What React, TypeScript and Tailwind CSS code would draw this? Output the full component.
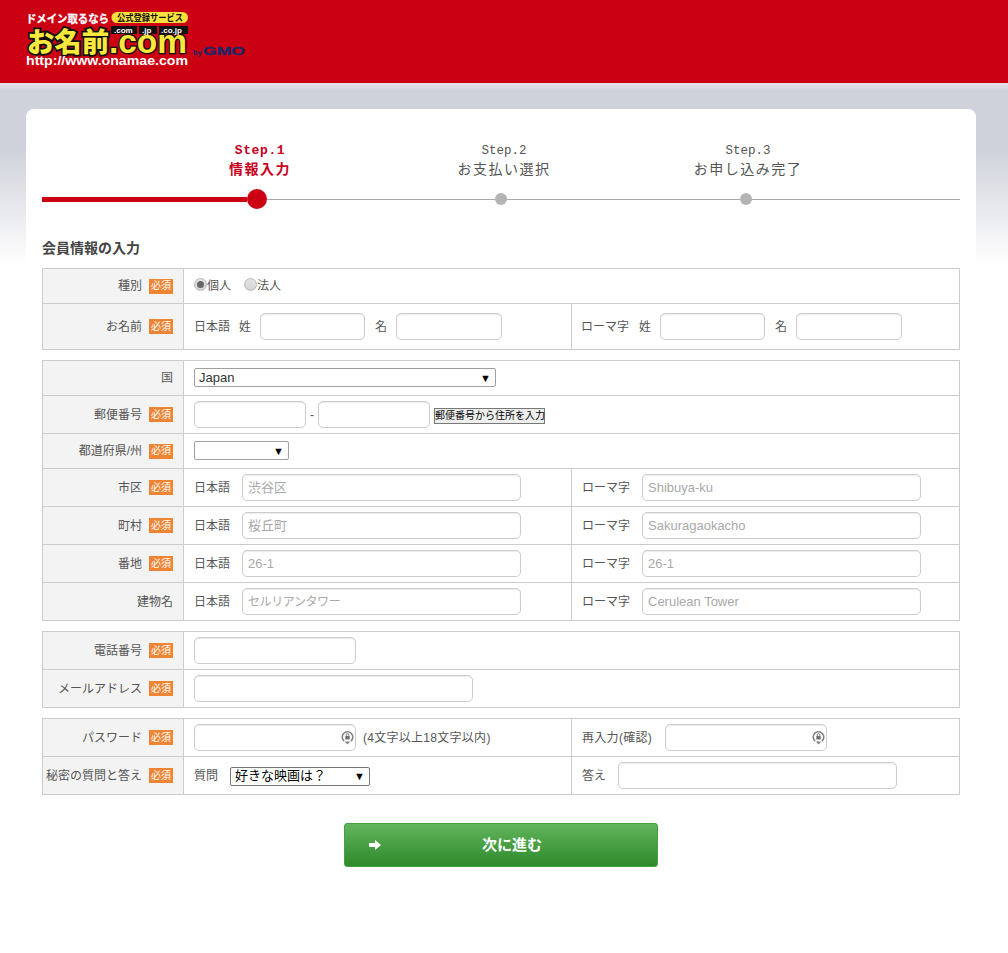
import React from "react";

const Req = () => (
  <span className="ml-[7px] mr-[10px] flex h-[15px] w-[24px] shrink-0 items-center justify-center bg-[#ef8433] text-[10px] leading-none text-white">
    必須
  </span>
);

const Label = ({ text, req = true }: { text: string; req?: boolean }) => (
  <div className="flex w-[141px] shrink-0 items-center justify-end whitespace-nowrap border-r border-[#ccc] bg-[#f3f3f3] text-[12px] text-[#555]">
    <span>{text}</span>
    {req ? <Req /> : <span className="mr-[10px]" />}
  </div>
);

const Row = ({ h, children }: { h: string; children: React.ReactNode }) => (
  <div className={`flex border-b border-[#ccc] last:border-b-0 ${h}`}>{children}</div>
);

const Box = ({ children }: { children: React.ReactNode }) => (
  <div className="w-[918px] border border-[#ccc]">{children}</div>
);

const Input = ({ w, placeholder, cls }: { w: string; placeholder?: string; cls?: string }) => (
  <input
    placeholder={placeholder}
    className={`h-[27px] shrink-0 rounded-[5px] border border-[#ccc] bg-white px-[5px] text-[#555] shadow-[inset_0_1px_1px_rgba(0,0,0,0.08)] outline-none placeholder:text-[#a9a9a9] ${
      cls ?? "text-[13px]"
    } ${w}`}
  />
);

const KeyIcon = () => (
  <svg viewBox="0 0 13 15" className="absolute right-[2px] top-[6px] h-[15px] w-[13px]" fill="none">
    <path d="M3.2 11.2 A5.3 5.3 0 1 1 9.8 11.2" stroke="#808080" strokeWidth="1.6" />
    <path d="M3.9 11.4 L9.1 11.4 L6.5 14.6 Z" fill="#808080" />
    <rect x="4.3" y="6" width="4.4" height="3.4" rx="0.5" fill="#707070" />
    <path d="M5.2 6 V5 A1.3 1.3 0 0 1 7.8 5 V6" stroke="#707070" strokeWidth="0.9" />
  </svg>
);

const PwInput = ({ w }: { w: string }) => (
  <div className={`relative h-[27px] shrink-0 ${w}`}>
    <input
      type="password"
      className="h-full w-full rounded-[5px] border border-[#ccc] bg-white px-[5px] shadow-[inset_0_1px_1px_rgba(0,0,0,0.08)] outline-none"
    />
    <KeyIcon />
  </div>
);

const Arrow = () => (
  <span className="pointer-events-none absolute right-[5px] top-1/2 -translate-y-1/2 text-[11px] leading-none text-black">▼</span>
);

const Select = ({ w, value, dark, shift }: { w: string; value: string; dark?: boolean; shift: string }) => (
  <div className={`relative h-[19px] shrink-0 ${w} ${shift}`}>
    <div
      className={`flex h-full w-full items-center rounded-[2px] border bg-white pl-[4px] text-[13px] ${
        dark ? "border-[#767676] text-black" : "border-[#a0a0a0] text-[#333]"
      }`}
    >
      {value}
    </div>
    <Arrow />
  </div>
);

const Left = ({ children }: { children: React.ReactNode }) => (
  <div className="flex w-[388px] shrink-0 items-center whitespace-nowrap border-r border-[#ccc] pl-[10px] text-[12px] text-[#555]">{children}</div>
);
const Right = ({ children }: { children: React.ReactNode }) => (
  <div className="flex flex-1 items-center whitespace-nowrap pl-[10px] text-[12px] text-[#555]">{children}</div>
);
const Full = ({ children }: { children: React.ReactNode }) => (
  <div className="flex flex-1 items-center whitespace-nowrap pl-[10px] text-[12px] text-[#555]">{children}</div>
);

const AddressRow = ({
  label,
  req,
  ja,
  ro,
  h = "h-[38px]",
  jaCls,
}: {
  label: string;
  req?: boolean;
  ja: string;
  ro: string;
  h?: string;
  jaCls?: string;
}) => (
  <Row h={h}>
    <Label text={label} req={req} />
    <Left>
      <span className="w-[48px]">日本語</span>
      <Input w="w-[279px]" placeholder={ja} cls={jaCls} />
    </Left>
    <Right>
      <span className="w-[60px]">ローマ字</span>
      <Input w="w-[279px]" placeholder={ro} />
    </Right>
  </Row>
);

const Radio = ({ checked, label }: { checked?: boolean; label: string }) => (
  <label className="mr-[13px] flex items-center">
    <span className="-mt-[4px] flex h-[13px] w-[13px] items-center justify-center rounded-full border border-[#b8b8b8] bg-[linear-gradient(#e4e4e4,#d4d4d4)]">
      {checked && <span className="h-[7px] w-[7px] rounded-full bg-[#666]" />}
    </span>
    <span>{label}</span>
  </label>
);

const Step = ({ n, title, active }: { n: number; title: string; active?: boolean }) => (
  <div className={`w-[244px] text-center leading-[18px] ${active ? "text-[#c8001e]" : "text-[#555]"}`}>
    <div className={`font-['Liberation_Mono',monospace] ${active ? "text-[13px] font-bold tracking-[0.6px]" : "text-[12.5px]"}`}>Step.{n}</div>
    <div className={`text-[14px] tracking-[1.5px] ${active ? "font-bold" : ""}`}>{title}</div>
  </div>
);

const Logo = () => (
  <svg width="250" height="83" viewBox="0 0 250 83" className="block" fontFamily="'Liberation Sans','Noto Sans CJK JP',sans-serif" fontWeight="700">
    <text x="26" y="22.5" fontSize="11" fill="#fff" stroke="#fff" strokeWidth="0.3" textLength="83" lengthAdjust="spacingAndGlyphs">ドメイン取るなら</text>
    <rect x="111.5" y="12" width="76.5" height="11" rx="5.5" fill="#f8e03c" />
    <text x="117" y="21.2" fontSize="9" fill="#111" textLength="66" lengthAdjust="spacingAndGlyphs">公式登録サービス</text>
    <text x="27" y="51.5" fontSize="27" fontWeight="900" fill="#fbe83c" stroke="#111" strokeWidth="3.6" paintOrder="stroke" textLength="82" lengthAdjust="spacingAndGlyphs">お名前</text>
    <text x="109" y="53" fontSize="34" fill="#fbe83c" stroke="#111" strokeWidth="2.6" paintOrder="stroke" textLength="78" lengthAdjust="spacingAndGlyphs">.com</text>
    <rect x="111" y="26" width="26" height="8" fill="#111" />
    <rect x="139" y="26" width="18" height="8" fill="#111" />
    <rect x="159" y="26" width="29" height="8" fill="#111" />
    <text x="114" y="33.2" fontSize="8" fill="#fff">.com</text>
    <text x="142" y="33.2" fontSize="8" fill="#fff">.jp</text>
    <text x="161" y="33.2" fontSize="8" fill="#fff">.co.jp</text>
    <text x="26" y="65" fontSize="12.5" fill="#fff" textLength="162" lengthAdjust="spacingAndGlyphs">http://www.onamae.com</text>
    <text x="193" y="54.5" fontSize="7.5" fill="#1c2566">by</text>
    <text x="203" y="54.5" fontSize="10.5" fill="#1c2566" stroke="#1c2566" strokeWidth="0.3" textLength="42" lengthAdjust="spacingAndGlyphs">GMO</text>
  </svg>
);

export default function App() {
  return (
    <div className="min-h-[953px] bg-[linear-gradient(to_bottom,#e6e6ec_83px,#d0d2db_91px,#d0d2db_150px,#ffffff_265px)] font-['Liberation_Sans','Noto_Sans_CJK_JP',sans-serif]">
      <header className="h-[83px] bg-[#cb0012]">
        <Logo />
      </header>

      <main className="ml-[26px] mt-[26px] w-[950px] rounded-t-[8px] bg-white px-[16px] pt-[33px]">
        <div className="flex pl-[96px]">
          <Step n={1} title="情報入力" active />
          <Step n={2} title="お支払い選択" />
          <Step n={3} title="お申し込み完了" />
        </div>

        <div className="mt-[11px] flex items-center">
          <div className="h-[5px] w-[205px] bg-[#cb0012]" />
          <div className="h-[20px] w-[20px] rounded-full bg-[#cb0012]" />
          <div className="h-px w-[228px] bg-[#aaaaaa]" />
          <div className="h-[12px] w-[12px] rounded-full bg-[#b4b4b4]" />
          <div className="h-px w-[233px] bg-[#aaaaaa]" />
          <div className="h-[12px] w-[12px] rounded-full bg-[#b4b4b4]" />
          <div className="h-px flex-1 bg-[#aaaaaa]" />
        </div>

        <h2 className="mb-[10px] mt-[29px] text-[14px] font-bold leading-[20px] text-[#444]">会員情報の入力</h2>

        <div className="flex flex-col gap-[10px]">
          <Box>
            <Row h="h-[35px]">
              <Label text="種別" />
              <Full>
                <Radio checked label="個人" />
                <Radio label="法人" />
              </Full>
            </Row>
            <Row h="h-[45px]">
              <Label text="お名前" />
              <Left>
                <span>日本語</span>
                <span className="ml-[9px] mr-[9px]">姓</span>
                <Input w="w-[105px]" />
                <span className="ml-[10px] mr-[9px]">名</span>
                <Input w="w-[106px]" />
              </Left>
              <Right>
                <span className="-ml-[1px]">ローマ字</span>
                <span className="ml-[10px] mr-[9px]">姓</span>
                <Input w="w-[105px]" />
                <span className="ml-[10px] mr-[9px]">名</span>
                <Input w="w-[106px]" />
              </Right>
            </Row>
          </Box>

          <Box>
            <Row h="h-[35px]">
              <Label text="国" req={false} />
              <Full>
                <Select w="w-[302px]" value="Japan" shift="-mt-[1px]" />
              </Full>
            </Row>
            <Row h="h-[38px]">
              <Label text="郵便番号" />
              <Full>
                <Input w="w-[112px]" />
                <span className="mx-[4px] w-[4px]">-</span>
                <Input w="w-[112px]" />
                <button className="ml-[4px] mt-[3px] h-[16px] w-[111px] whitespace-nowrap border border-[#777] bg-[#eeeeee] text-[10px] leading-none text-black">
                  郵便番号から住所を入力
                </button>
              </Full>
            </Row>
            <Row h="h-[35px]">
              <Label text="都道府県/州" />
              <Full>
                <Select w="w-[95px]" value="" shift="-mt-[1px]" />
              </Full>
            </Row>
            <AddressRow label="市区" req ja="渋谷区" ro="Shibuya-ku" />
            <AddressRow label="町村" req ja="桜丘町" ro="Sakuragaokacho" />
            <AddressRow label="番地" req ja="26-1" ro="26-1" />
            <AddressRow
              label="建物名"
              req={false}
              ja="セルリアンタワー"
              ro="Cerulean Tower"
              h="h-[37px]"
              jaCls="text-[12px] tracking-[-0.4px]"
            />
          </Box>

          <Box>
            <Row h="h-[38px]">
              <Label text="電話番号" />
              <Full>
                <Input w="w-[162px]" />
              </Full>
            </Row>
            <Row h="h-[37px]">
              <Label text="メールアドレス" />
              <Full>
                <Input w="w-[279px]" />
              </Full>
            </Row>
          </Box>

          <Box>
            <Row h="h-[38px]">
              <Label text="パスワード" />
              <Left>
                <PwInput w="w-[162px]" />
                <span className="ml-[7px] tracking-[0.28px]">(4文字以上18文字以内)</span>
              </Left>
              <Right>
                <span className="w-[83px] tracking-[0.3px]">再入力(確認)</span>
                <PwInput w="w-[162px]" />
              </Right>
            </Row>
            <Row h="h-[37px]">
              <Label text="秘密の質問と答え" />
              <Left>
                <span className="w-[36px]">質問</span>
                <Select w="w-[140px]" value="好きな映画は？" dark shift="mt-[1px]" />
              </Left>
              <Right>
                <span className="w-[36px]">答え</span>
                <Input w="w-[279px]" />
              </Right>
            </Row>
          </Box>
        </div>

        <div className="mt-[28px] flex justify-center">
          <button className="flex h-[44px] w-[314px] items-center rounded-[3px] border border-[#48a044] bg-[linear-gradient(#62b45c,#2e8a2b)] pl-[24px] text-[15px] font-bold text-white">
            <svg viewBox="0 0 12 10" className="h-[10px] w-[12px]" fill="#fff">
              <path d="M0 3 H6 V0 L12 5 L6 10 V7 H0 Z" />
            </svg>
            <span className="ml-[101px]">次に進む</span>
          </button>
        </div>
      </main>
    </div>
  );
}
